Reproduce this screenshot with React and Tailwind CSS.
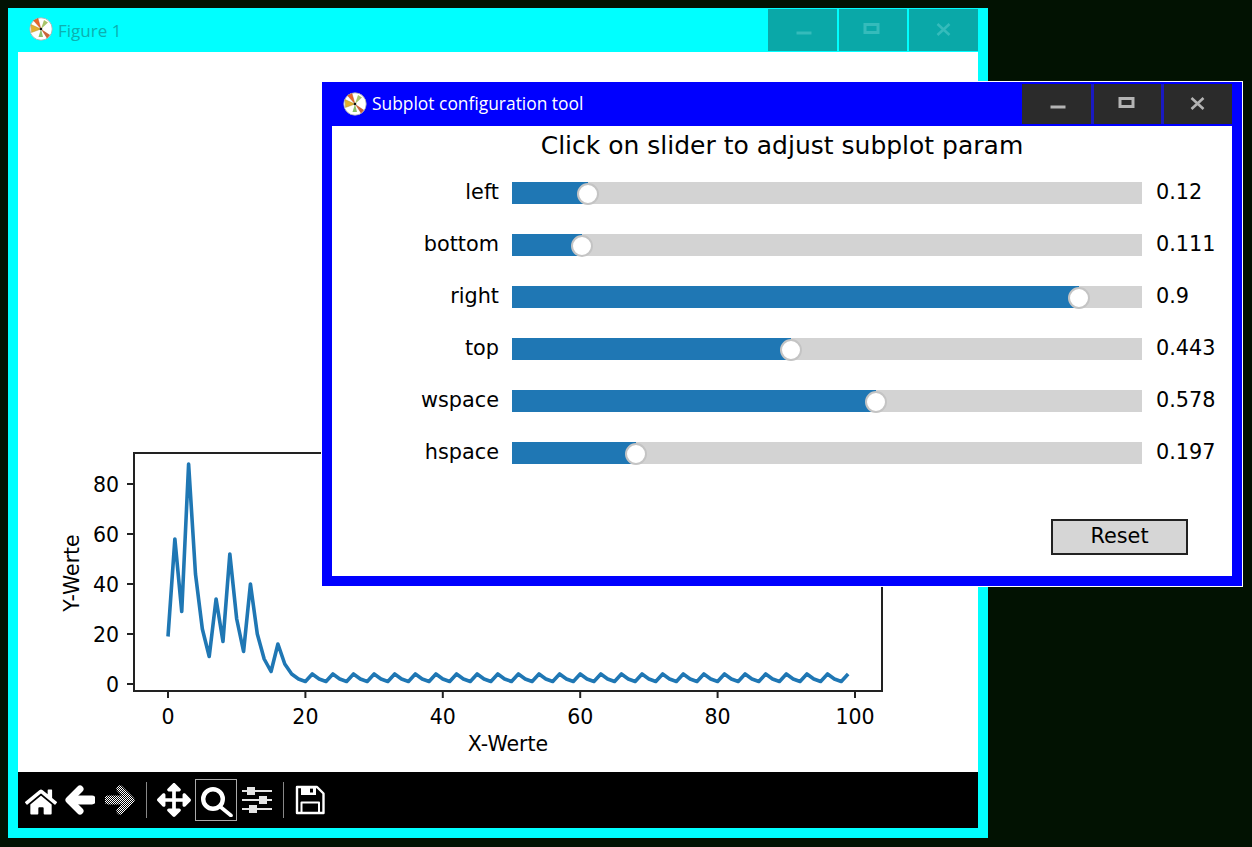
import React from 'react';
import { FaHome, FaArrowsAlt } from 'react-icons/fa';

const sliders = [
  { label: 'left', value: '0.12', pos: 76 },
  { label: 'bottom', value: '0.111', pos: 70 },
  { label: 'right', value: '0.9', pos: 567 },
  { label: 'top', value: '0.443', pos: 279 },
  { label: 'wspace', value: '0.578', pos: 364 },
  { label: 'hspace', value: '0.197', pos: 124 },
];

// collatz run starting at 19, then the 4-2-1 loop
const getData = () => {
  const out = [19];
  while (out.length < 100) {
    const v = out[out.length - 1];
    out.push(v === 1 ? 4 : v % 2 === 0 ? v / 2 : 3 * v + 1);
  }
  return out;
};

const px = (x) => 168 + x * 6.87;
const py = (y) => 684 - y * 2.5;

const Logo = ({ className = '' }) => (
  <svg viewBox="0 0 24 24" className={`w-6 h-6 shrink-0 ${className}`}>
    <circle cx="12" cy="12" r="11.2" fill="#fff" stroke="#aaa" strokeWidth="0.8" />
    <path d="M12 12 L4.5 3.5 L9 1.5 Z" fill="#e8662a" stroke="#a5501f" strokeWidth="0.4" />
    <path d="M12 12 L2 7.5 L2.5 15.5 Z" fill="#e3b02e" stroke="#a5851f" strokeWidth="0.4" />
    <path d="M12 12 L21 18 L18 21.5 Z" fill="#c9653a" />
    <path d="M12 12 L15 3 L19 5.5 Z" fill="#a8c46a" />
    <path d="M12 12 L9.5 20 L14 20 Z" fill="#8cc06a" />
    <circle cx="12" cy="12" r="1.3" fill="#111" />
  </svg>
);

const WinButtons = ({ bg, glyph, divider, height }) => (
  <div className="flex">
    {['min', 'max', 'close'].map((k) => (
      <div
        key={k}
        className={`flex items-center justify-center ${height} ${bg} ${
          k === 'min' ? 'w-[69px]' : k === 'max' ? `w-[70px] ${divider}` : `w-[71px] ${divider}`
        }`}
      >
        <svg width="20" height="20" viewBox="0 0 20 20" fill="none" stroke={glyph}>
          {k === 'min' && <path d="M3.5 13 H18.5" strokeWidth="3" />}
          {k === 'max' && <rect x="2" y="4.5" width="13" height="8" strokeWidth="3" />}
          {k === 'close' && <path d="M3.5 4 L15.5 15 M15.5 4 L3.5 15" strokeWidth="2.6" />}
        </svg>
      </div>
    ))}
  </div>
);

const Chart = () => {
  const data = getData();
  const points = data.map((v, i) => `${px(i)},${py(v)}`).join(' ');
  return (
    <svg viewBox="18 52 960 720" className="w-full h-full block" style={{ fontFamily: '"DejaVu Sans", sans-serif' }}>
      <rect x="134" y="453" width="748" height="238" fill="none" stroke="#222" strokeWidth="2" />
      <polyline points={points} fill="none" stroke="#1f77b4" strokeWidth="3.6" strokeLinejoin="round" />
      {[0, 20, 40, 60, 80, 100].map((t) => (
        <g key={t}>
          <path d={`M${px(t)} 691 V698`} stroke="#222" strokeWidth="2" />
          <text x={px(t)} y="724" textAnchor="middle" fontSize="20.5" fill="#000">{t}</text>
        </g>
      ))}
      {[0, 20, 40, 60, 80].map((t) => (
        <g key={t}>
          <path d={`M127 ${py(t)} H134`} stroke="#222" strokeWidth="2" />
          <text x="119" y={py(t) + 7.5} textAnchor="end" fontSize="20.5" fill="#000">{t}</text>
        </g>
      ))}
      <text x="508" y="751" textAnchor="middle" fontSize="20.5" fill="#000">X-Werte</text>
      <text transform="translate(79 573) rotate(-90)" textAnchor="middle" fontSize="20.5" fill="#000">Y-Werte</text>
    </svg>
  );
};

const ArrowIcon = ({ flip, paint }) => (
  <svg width="30" height="30" viewBox="0 0 30 30" fill="none" stroke={paint} strokeLinecap="round" strokeLinejoin="round">
    {flip ? (
      <>
        <path d="M15 4 L26 15 L15 26" strokeWidth="7" />
        <path d="M3 15 H24" strokeWidth="9" />
      </>
    ) : (
      <>
        <path d="M15 4 L4 15 L15 26" strokeWidth="7" />
        <path d="M6 15 H27" strokeWidth="9" />
      </>
    )}
  </svg>
);

const SearchIcon = () => (
  <svg width="34" height="34" viewBox="0 0 34 34" fill="none" stroke="#fff" strokeLinecap="round">
    <circle cx="14" cy="16" r="9.8" strokeWidth="4.4" />
    <path d="M21 23.5 L32 32.5" strokeWidth="3.6" />
  </svg>
);

const SlidersIcon = () => (
  <svg width="30" height="26" viewBox="0 0 30 26" fill="#e4e4e4">
    <rect x="0" y="3" width="30" height="2" />
    <rect x="5" y="0" width="8" height="8" />
    <rect x="0" y="12" width="30" height="2" />
    <rect x="17" y="9" width="8" height="8" />
    <rect x="0" y="21" width="30" height="2" />
    <rect x="7" y="18" width="8" height="8" />
  </svg>
);

const SaveIcon = () => (
  <svg width="30" height="30" viewBox="0 0 30 30" fill="none" stroke="#fff" strokeLinejoin="round">
    <path d="M2 2 H22 L28.5 8.5 V28 H2 Z" strokeWidth="2.4" />
    <path d="M6 2 H21 V10 H6 Z M15 3.5 V7.5 H18 V3.5 Z" fill="#fff" fillRule="evenodd" stroke="none" />
    <rect x="6.5" y="17.5" width="17.5" height="10.5" strokeWidth="2" />
  </svg>
);

const Toolbar = () => (
  <div className="h-14 bg-black flex items-center pl-[2px] text-white">
    <svg width="0" height="0" className="absolute">
      <defs>
        <pattern id="dither" width="2" height="2" patternUnits="userSpaceOnUse">
          <rect width="1" height="1" fill="#fff" />
          <rect x="1" y="1" width="1" height="1" fill="#fff" />
        </pattern>
      </defs>
    </svg>
    <div className="w-10 flex justify-center pt-[3px] pl-[1px]"><FaHome size={32} /></div>
    <div className="w-10 flex justify-center"><ArrowIcon paint="#fff" /></div>
    <div className="w-10 flex justify-center"><ArrowIcon flip paint="url(#dither)" /></div>
    <div className="w-px h-9 bg-[#888] ml-[6px]" />
    <div className="w-[42px] ml-[6px] flex justify-center"><FaArrowsAlt size={34} /></div>
    <div className="w-[42px] h-[42px] border border-[#aaa] flex items-center justify-center"><SearchIcon /></div>
    <div className="w-10 flex justify-center"><SlidersIcon /></div>
    <div className="w-px h-9 bg-[#888] ml-[6px]" />
    <div className="w-[50px] ml-[1px] flex justify-center"><SaveIcon /></div>
  </div>
);

const FigureWindow = () => (
  <div className="absolute left-2 top-2 w-[980px] h-[830px] bg-[#00ffff] px-[10px] pb-[10px] flex flex-col">
    <div className="h-11 flex items-start justify-between">
      <div className="flex items-center gap-[5px] h-11 pl-[11px] text-[#0cb0b0] text-[17px]">
        <Logo className="mb-[2px]" />
        <span className="mt-[2px]">Figure 1</span>
      </div>
      <div className="pt-px">
        <WinButtons bg="bg-[#0aa8a8]" glyph="#35bbbb" divider="border-l-2 border-[#00ffff]" height="h-[42px]" />
      </div>
    </div>
    <div className="flex-1 bg-white min-h-0">
      <Chart />
    </div>
    <Toolbar />
  </div>
);

const SliderRow = ({ label, value, pos }) => (
  <div className="flex items-center h-[22px]">
    <div className="w-[167px] text-right">{label}</div>
    <div className="relative w-[630px] h-[22px] ml-[13px] bg-[#d3d3d3]">
      <div className="h-full bg-[#1f77b4]" style={{ width: pos }} />
      <div className="absolute top-px w-[22px] h-[22px] -ml-[11px] rounded-full bg-white border-2 border-[#c4c4c4]" style={{ left: pos }} />
    </div>
    <div className="ml-[14px]">{value}</div>
  </div>
);

const ConfigWindow = () => (
  <div className="absolute left-[321px] top-[81px] w-[922px] h-[506px] border border-white bg-[#0000ff] px-[10px] pb-[10px] flex flex-col">
    <div className="h-11 flex items-center justify-between">
      <div className="flex items-center gap-[5px] pl-[11px] text-white text-[17.4px]">
        <Logo />
        <span className="pb-[2px]">Subplot configuration tool</span>
      </div>
      <WinButtons bg="bg-[#2b2b2b]" glyph="#b4b4b4" divider="border-l-[3px] border-[#1a1ac0]" height="h-10" />
    </div>
    <div className="flex-1 bg-white text-black text-[20.8px] font-['DejaVu_Sans',sans-serif]">
      <div className="text-center text-[25px] leading-[28px] pt-[6px]">Click on slider to adjust subplot param</div>
      <div className="flex flex-col gap-[30px] mt-[22px]">
        {sliders.map((s) => (
          <SliderRow key={s.label} {...s} />
        ))}
      </div>
      <div className="flex justify-end pr-[44px] mt-[55px]">
        <div className="w-[137px] h-9 border-2 border-[#222] bg-[#d6d6d6] flex items-center justify-center">Reset</div>
      </div>
    </div>
  </div>
);

const App = () => (
  <div className="relative w-[1252px] h-[847px] bg-[#021202] overflow-hidden font-['Open_Sans',sans-serif]">
    <FigureWindow />
    <ConfigWindow />
  </div>
);

export default App;
